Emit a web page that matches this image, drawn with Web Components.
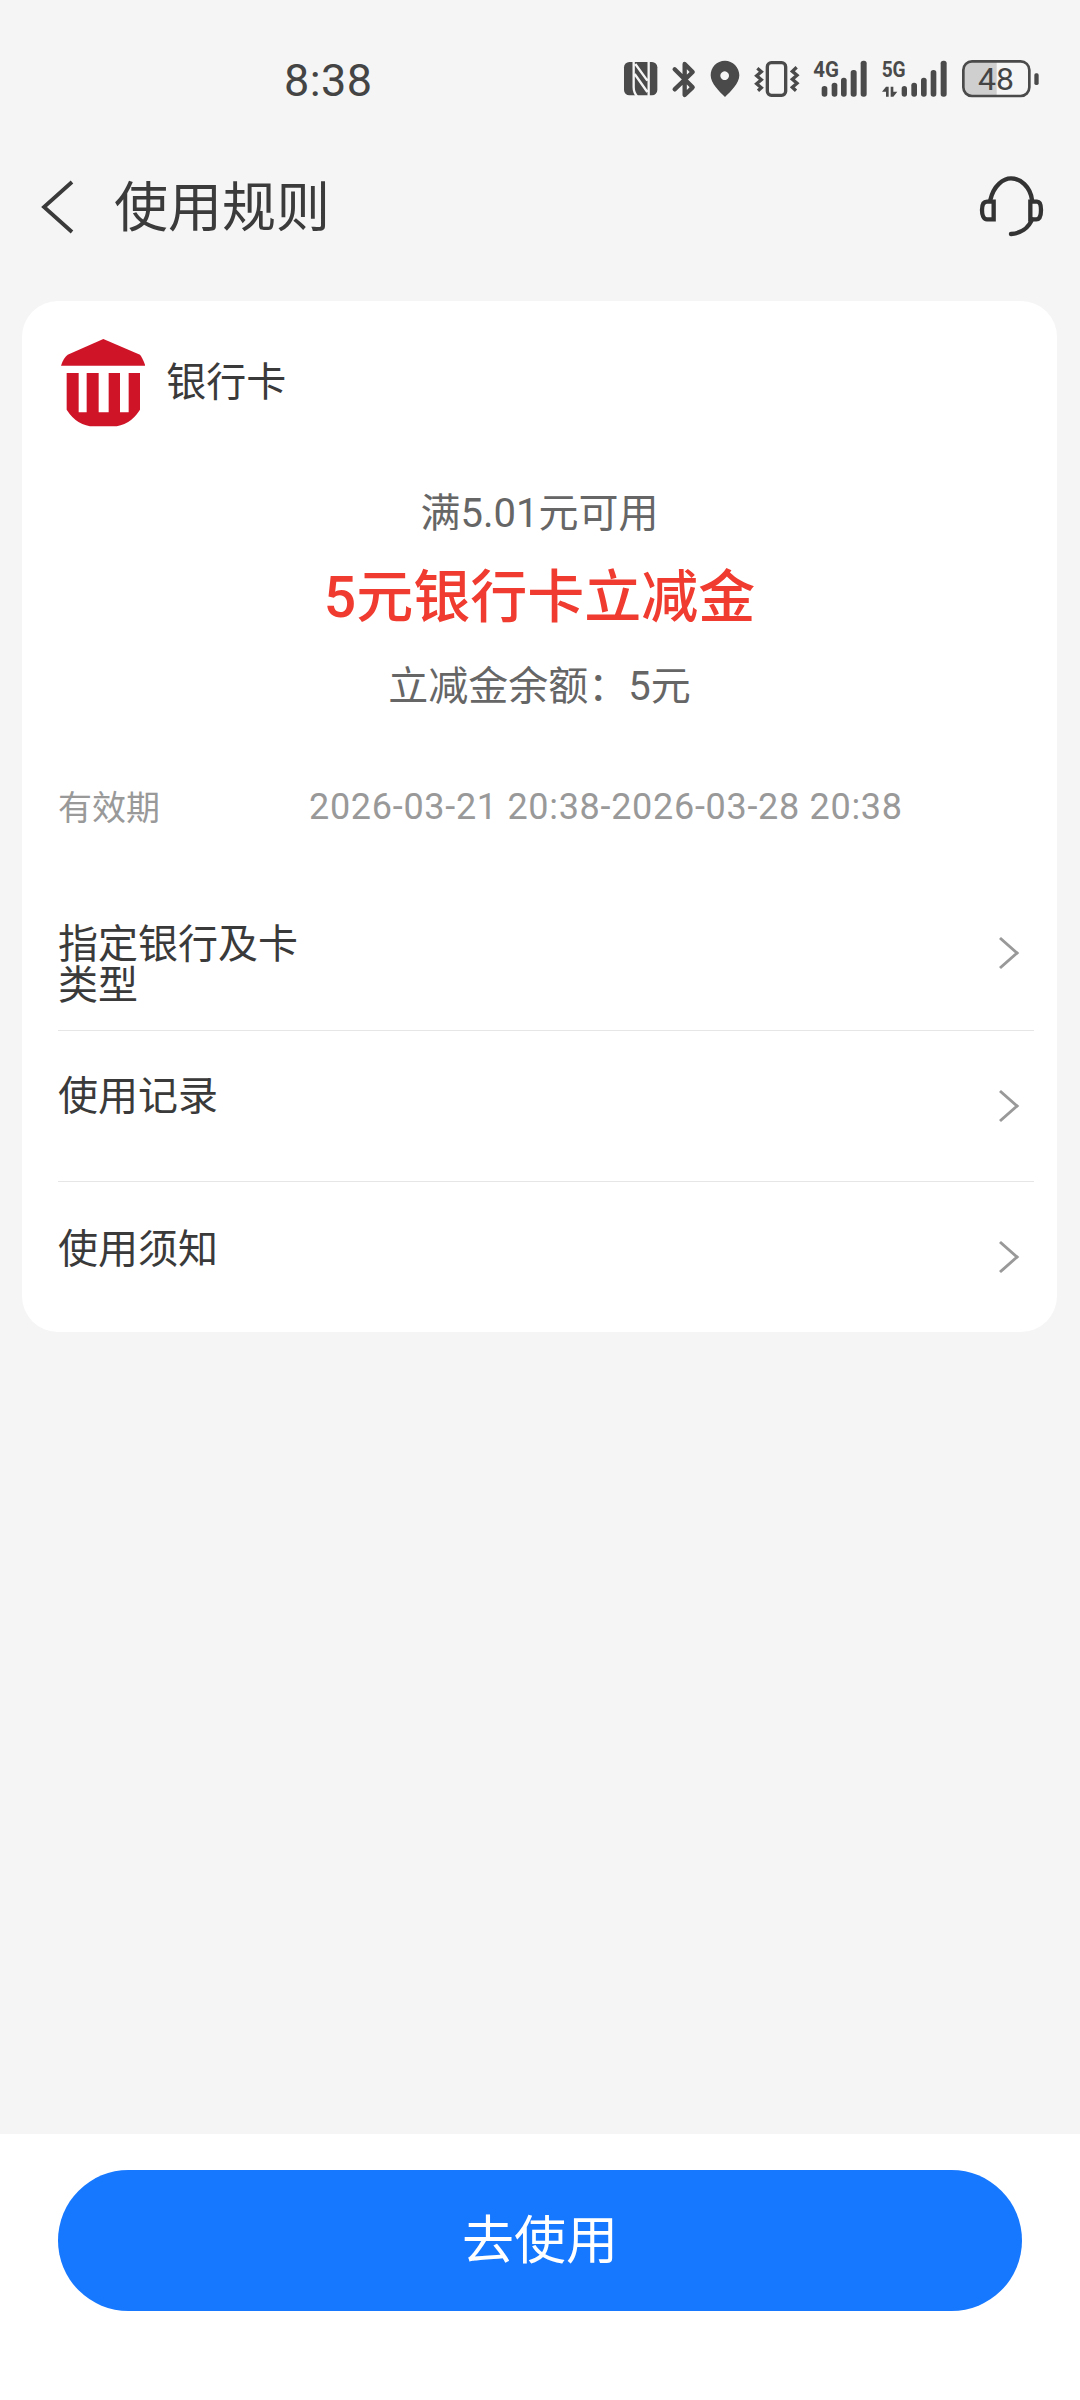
<!DOCTYPE html>
<html><head><meta charset="utf-8">
<style>
html,body{margin:0;padding:0;background:#f5f5f5;}
body{width:1080px;height:2400px;font-family:Roboto,"Noto Sans CJK SC",sans-serif;color:#333;overflow:hidden;}
app-page{height:2400px;}
</style></head><body>
<template id="t-page"><style>
:host{display:flex;flex-direction:column;height:2400px}
.main{flex:1;min-height:0;display:flex;flex-direction:column}
</style><div class="main"><slot></slot></div><slot name="foot"></slot></template>

<template id="t-status"><style>
:host{display:flex;align-items:center;height:160px;box-sizing:border-box;padding:0 0 0 284px;color:#444}
.t{font:400 45px/1 Roboto,sans-serif;width:316px;letter-spacing:.4px;}
svg{display:block}
</style><div class="t">8:38</div>
<svg width="480" height="80" viewBox="0 0 1440 240" fill="#4a4a4a">
<!-- NFC -->
<rect x="72" y="66" width="100" height="100" rx="16"/>
<path d="M101 62V142Q101 158 112 170M146 62V90Q146 106 146 170M106 72L142 122M104 102L142 156" fill="none" stroke="#f5f5f5" stroke-width="7"/>
<!-- BT -->
<path d="M224 88L278 142L254 165V72L278 96L224 148" fill="none" stroke="#4a4a4a" stroke-width="13" stroke-linejoin="round" stroke-linecap="round"/>
<!-- pin -->
<path fill-rule="evenodd" d="M375 62C350 62 332 82 332 106C332 130 358 155 375 171C392 155 418 130 418 106C418 82 398 62 375 62ZM374 94a13 13 0 1 0 .01 0Z"/>
<!-- vibrate -->
<rect x="502" y="68" width="55" height="98" rx="12" fill="none" stroke="#4a4a4a" stroke-width="10"/>
<path d="M472 85L484 95L470 107L484 119L470 131L484 143L474 152M590 82L577 94L591 106L577 118L591 130L577 142L588 152" fill="none" stroke="#4a4a4a" stroke-width="10"/>
<!-- 4G -->
<text x="640" y="112" font-family="Roboto,sans-serif" font-weight="700" font-size="64" textLength="77" lengthAdjust="spacingAndGlyphs">4G</text>
<rect x="665" y="138" width="17" height="32" rx="8"/><rect x="695" y="128" width="17" height="42" rx="8"/><rect x="723" y="113" width="17" height="57" rx="8"/><rect x="752" y="90" width="18" height="80" rx="8"/><rect x="782" y="62" width="18" height="108" rx="8"/>
<!-- 5G -->
<text x="845" y="112" font-family="Roboto,sans-serif" font-weight="700" font-size="64" textLength="72" lengthAdjust="spacingAndGlyphs">5G</text>
<path d="M846 155L858 140H866V170H858V155ZM872 140H880V155H892L880 170H872Z"/>
<rect x="905" y="138" width="16" height="32" rx="8"/><rect x="934" y="128" width="17" height="42" rx="8"/><rect x="963" y="113" width="17" height="57" rx="8"/><rect x="992" y="90" width="17" height="80" rx="8"/><rect x="1022" y="62" width="18" height="108" rx="8"/>
<!-- battery -->
<path d="M1114 64H1190V168H1114Q1090 168 1090 144V88Q1090 64 1114 64Z" fill="#cfcfcf"/>
<rect x="1090" y="64" width="198" height="104" rx="26" fill="none" stroke="#4a4a4a" stroke-width="8"/>
<rect x="1303" y="100" width="13" height="35" rx="5"/>
<text x="1188" y="150" font-family="Roboto,sans-serif" font-weight="400" font-size="96" text-anchor="middle" fill="#444">48</text>
</svg></template>

<template id="t-nav"><style>
:host{display:flex;align-items:center;height:90px;padding:0 35px 0 40px;margin-bottom:51px}
svg{display:block;flex:none;margin-top:4px}
.t{flex:1;font:400 54px/1 "Noto Sans CJK SC",sans-serif;color:#3b3b3b;margin:-3px 0 0 36px}
.h{margin-top:5px}
</style>
<svg width="38" height="56" viewBox="0 0 38 56"><path d="M32 3L4 28l28 25" fill="none" stroke="#3a3a3a" stroke-width="3.8"/></svg>
<div class="t"><slot></slot></div>
<svg class="h" width="68.33" height="65" viewBox="110 75 205 195" fill="none" stroke="#333" stroke-width="13" stroke-linecap="round"><path d="M150 150C160 105 190 85 212 85C240 85 270 110 275 150"/><path d="M160 155H140C128 155 125 165 125 180C125 195 130 208 140 208H160ZM270 155H290C300 155 302 170 302 180C302 195 298 208 288 208H270Z"/><path d="M275 208C265 235 240 250 212 252"/></svg>
</template>

<template id="t-card"><style>
:host{display:block;margin:0 23px 0 22px;background:#fff;border-radius:36px;height:1031px;box-sizing:border-box;padding:38px 23px 0 36px}
.h{display:flex;align-items:center;height:88px;font:400 40px/1 "Noto Sans CJK SC",sans-serif;color:#3a3a3a}
svg{display:block;margin:0 21px 0 3px}
span{margin-top:-8px}
</style>
<div class="h"><svg width="84.33" height="87.33" viewBox="35 28 253 262" fill="#cf1428"><path d="M162 28L55 75Q42 85 35 108H288Q280 85 272 75Z"/><path d="M52 130H88V248H112V130H148V248H178V130H212V248H238V130H272V240Q240 290 190 290H134Q84 290 52 240Z"/></svg><span><slot name="title"></slot></span></div>
<slot></slot></template>

<template id="t-offer"><style>
:host{display:flex;flex-direction:column;align-items:center;margin-left:-36px;margin-right:-23px;color:#666;text-align:center}
.a{font:400 40px/1 Roboto,"Noto Sans CJK SC",sans-serif;margin-top:67px;color:#666}
.b{font:500 57px/1 Roboto,"Noto Sans CJK SC",sans-serif;color:#f03c30;margin-top:35px}
.c{font:400 40px/1 Roboto,"Noto Sans CJK SC",sans-serif;margin-top:41px;color:#666}
</style><div class="a"><slot name="a"></slot></div><div class="b"><slot name="b"></slot></div><div class="c"><slot name="c"></slot></div></template>

<template id="t-valid"><style>
:host{display:flex;align-items:center;margin:79px 0 0 0;height:40px;color:#999}
.l{width:251px;font:400 34px/1 "Noto Sans CJK SC",sans-serif}
.v{font:400 36px/1 Roboto,sans-serif;letter-spacing:.7px;padding-top:2px}
</style><div class="l"><slot name="l"></slot></div><div class="v"><slot name="v"></slot></div></template>

<template id="t-row"><style>
:host{display:flex;height:151px;box-sizing:border-box;border-bottom:1.5px solid #e6e6e6;padding-top:42px;position:relative}
:host([last]){border-bottom:0;padding-top:44px}
:host([first]){height:165px;margin-top:40px;padding-top:55px}
.t{width:250px;font:400 40px/41px "Noto Sans CJK SC",sans-serif;color:#3a3a3a}
svg{position:absolute;right:14px;top:57px}
:host([first]) svg{top:69px}
</style><div class="t"><slot></slot></div><svg width="22" height="36" viewBox="0 0 22 36"><path d="M2 3l17 15L2 33" fill="none" stroke="#999" stroke-width="3"/></svg></template>

<template id="t-foot"><style>
:host{display:block;background:#fff;height:266px;box-sizing:border-box;padding:36px 58px 0}
.b{height:141px;box-sizing:border-box;padding-bottom:8px;border-radius:71px;background:#1677ff;color:#fff;display:flex;align-items:center;justify-content:center;font:400 52px/1 "Noto Sans CJK SC",sans-serif}
</style><div class="b"><slot></slot></div></template>

<app-page>
<status-bar></status-bar>
<nav-bar>使用规则</nav-bar>
<rule-card>
<span slot="title">银行卡</span>
<offer-block><span slot="a">满5.01元可用</span><span slot="b">5元银行卡立减金</span><span slot="c">立减金余额：5元</span></offer-block>
<valid-row><span slot="l">有效期</span><span slot="v">2026-03-21 20:38-2026-03-28 20:38</span></valid-row>
<link-row first>指定银行及卡类型</link-row>
<link-row>使用记录</link-row>
<link-row last>使用须知</link-row>
</rule-card>
<foot-bar slot="foot">去使用</foot-bar>
</app-page>
<script>
for(const [n,t] of [['app-page','t-page'],['status-bar','t-status'],['nav-bar','t-nav'],['rule-card','t-card'],['offer-block','t-offer'],['valid-row','t-valid'],['link-row','t-row'],['foot-bar','t-foot']]){
customElements.define(n,class extends HTMLElement{constructor(){super();this.attachShadow({mode:'open'}).appendChild(document.getElementById(t).content.cloneNode(true));}});
}
</script>
</body></html>
